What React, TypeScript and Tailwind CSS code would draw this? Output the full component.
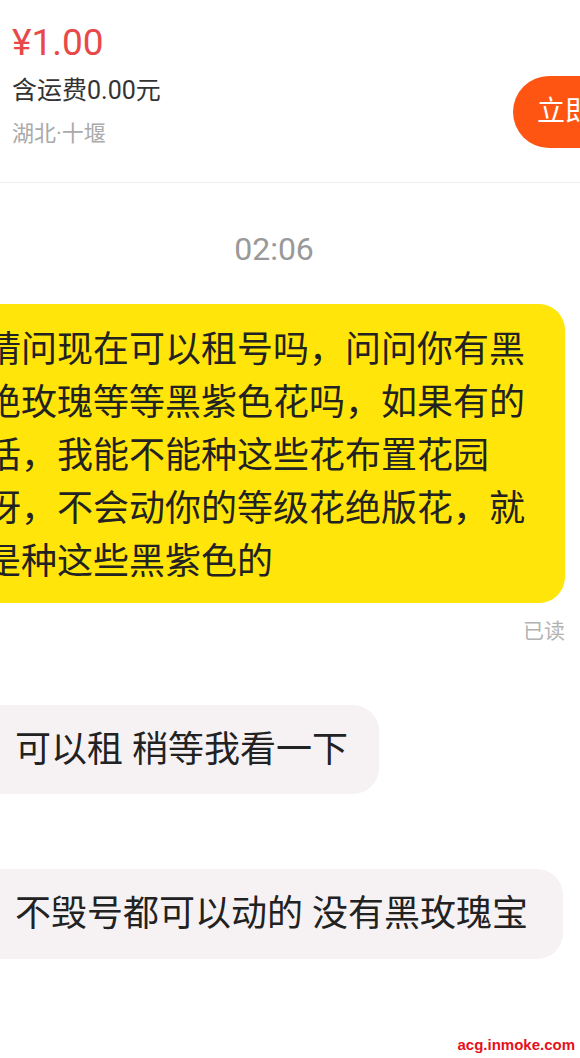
import React from 'react';

const ChatScreen = () => {
  return (
    <div className="relative w-[580px] h-[1058px] overflow-hidden bg-white font-['Roboto','Noto_Sans_CJK_SC',sans-serif] text-[#222]">
      {/* item header */}
      <div className="flex h-[183px] border-b border-[#eeeeee]">
        <div className="flex flex-col pl-3">
          <div className="mt-[21px] text-[37px] leading-[44px] text-[#e94848]">¥1.00</div>
          <div className="mt-[10px] text-[25px] leading-[32px] text-[#333]">含运费0.00元</div>
          <div className="mt-[12px] text-[22px] leading-[30px] text-[#aaaaaa]">湖北·十堰</div>
        </div>
        <button className="ml-auto mt-[76px] h-[72px] w-[150px] shrink-0 -mr-[83px] rounded-full bg-[#ff5513] pl-[24px] text-left text-[28px] text-white">
          立即购买
        </button>
      </div>

      {/* messages */}
      <div className="flex flex-col">
        <div className="mt-[46px] pr-[32px] text-center text-[32px] leading-[40px] text-[#999]">02:06</div>

        <div className="mt-[35px] -ml-[50px] w-[615px] rounded-[26px] bg-[#ffe50a] pl-[35px] pr-[32px] pt-[20px] pb-[14px] text-[36px] leading-[53px] text-[#222]">
          请问现在可以租号吗，问问你有黑绝玫瑰等等黑紫色花吗，如果有的话，我能不能种这些花布置花园呀，不会动你的等级花绝版花，就是种这些黑紫色的
        </div>

        <div className="mt-[14px] pr-[15px] text-right text-[21px] leading-[28px] text-[#b3b3b3]">已读</div>

        <div className="flex flex-col items-start">
          <div className="mt-[60px] -ml-[30px] flex h-[89px] items-center rounded-[26px] bg-[#f6f2f4] pl-[45px] pr-[31px] text-[36px] text-[#222]">
            可以租 稍等我看一下
          </div>
          <div className="mt-[75px] -ml-[30px] flex h-[90px] items-center rounded-[26px] bg-[#f6f2f4] pl-[45px] pr-[35px] text-[36px] text-[#222]">
            不毁号都可以动的 没有黑玫瑰宝
          </div>
        </div>
      </div>

      <div className="absolute bottom-[4px] right-[5px] font-['Liberation_Sans',sans-serif] text-[15px] font-bold leading-[18px] text-[#e8101a]">
        acg.inmoke.com
      </div>
    </div>
  );
};

export default function App() {
  return <ChatScreen />;
}
